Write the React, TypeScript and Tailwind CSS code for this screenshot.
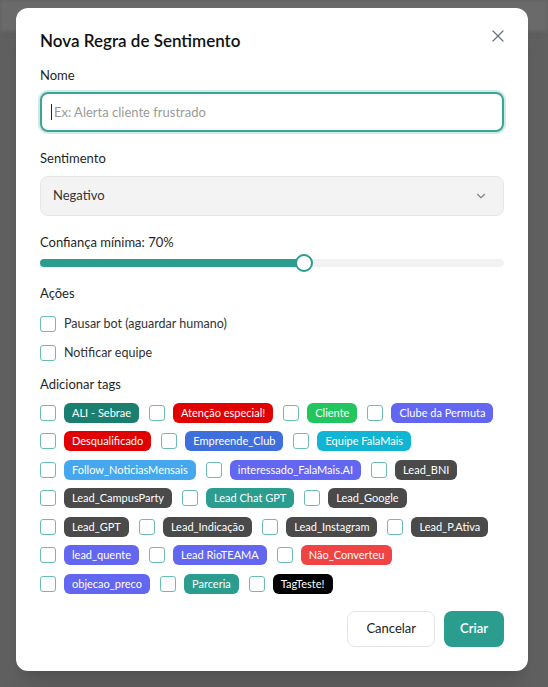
import { X, ChevronDown } from 'lucide-react'

type Tag = { label: string; color: string }

const tags: Tag[] = [
  { label: 'ALI - Sebrae', color: 'bg-[#1b7f6f]' },
  { label: 'Atenção especial!', color: 'bg-[#e00000]' },
  { label: 'Cliente', color: 'bg-[#22c55e]' },
  { label: 'Clube da Permuta', color: 'bg-[#6366f1]' },
  { label: 'Desqualificado', color: 'bg-[#e00000]' },
  { label: 'Empreende_Club', color: 'bg-[#3f6fdc]' },
  { label: 'Equipe FalaMais', color: 'bg-[#0fb5d3]' },
  { label: 'Follow_NoticiasMensais', color: 'bg-[#45a8ee]' },
  { label: 'interessado_FalaMais.AI', color: 'bg-[#6366f1]' },
  { label: 'Lead_BNI', color: 'bg-[#4a4a4a]' },
  { label: 'Lead_CampusParty', color: 'bg-[#4a4a4a]' },
  { label: 'Lead Chat GPT', color: 'bg-[#2a9d8f]' },
  { label: 'Lead_Google', color: 'bg-[#4a4a4a]' },
  { label: 'Lead_GPT', color: 'bg-[#4a4a4a]' },
  { label: 'Lead_Indicação', color: 'bg-[#4a4a4a]' },
  { label: 'Lead_Instagram', color: 'bg-[#4a4a4a]' },
  { label: 'Lead_P.Ativa', color: 'bg-[#4a4a4a]' },
  { label: 'lead_quente', color: 'bg-[#6366f1]' },
  { label: 'Lead RioTEAMA', color: 'bg-[#6366f1]' },
  { label: 'Não_Converteu', color: 'bg-[#f04444]' },
  { label: 'objecao_preco', color: 'bg-[#6366f1]' },
  { label: 'Parceria', color: 'bg-[#2a9d8f]' },
  { label: 'TagTeste!', color: 'bg-black' },
]

function Box() {
  return <span className="block w-4 h-4 shrink-0 rounded-[3px] border-[1.5px] border-[#6bbdb2] bg-white" />
}

function Label({ children }: { children: React.ReactNode }) {
  return <p className="text-[13px] leading-5 text-[#1f1f1f]">{children}</p>
}

export default function App() {
  return (
    <div className="relative h-[687px] w-full overflow-hidden bg-[#606060] font-['Lato',sans-serif]">
      {/* blurred page header behind the overlay */}
      <div className="absolute inset-x-0 top-0 h-[34px] bg-[#6a6a6a] border-b-2 border-[#575757] blur-[2px]" />

      <div className="relative flex pl-4 pt-2">
        <div className="relative w-[512px] rounded-xl bg-white p-6 shadow-xl">
          <button className="absolute right-5 top-[18px] text-[#6b7280]">
            <X size={20} strokeWidth={1.5} />
          </button>

          <h2 className="text-[17px] font-semibold leading-[18px] text-[#111]">Nova Regra de Sentimento</h2>

          {/* Nome */}
          <div className="mt-[15px]">
            <Label>Nome</Label>
            <div className="relative mt-[7px]">
              <input
                className="h-10 w-full rounded-lg border-2 border-[#3aa596] px-3 text-[13px] text-[#222] outline-none ring-2 ring-[#cfeae6] placeholder:text-[#9a9a9a]"
                placeholder="Ex: Alerta cliente frustrado"
              />
              <span className="absolute left-[11px] top-[12px] h-4 w-px bg-[#222]" />
            </div>
          </div>

          {/* Sentimento */}
          <div className="mt-4">
            <Label>Sentimento</Label>
            <div className="mt-[8px] flex h-10 items-center justify-between rounded-lg border border-[#e6e6e6] bg-[#f3f3f3] pl-3 pr-[15px] text-[13px] text-[#333]">
              <span>Negativo</span>
              <ChevronDown size={14} className="text-[#888]" />
            </div>
          </div>

          {/* Confiança */}
          <div className="mt-4">
            <Label>Confiança mínima: 70%</Label>
            <div className="relative mt-[2px] h-[18px]">
              <div className="absolute inset-x-0 top-[5px] h-2 rounded-full bg-[#f1f1f1]" />
              <div className="absolute left-0 top-[5px] h-2 w-[57%] rounded-full bg-[#2a9d8f]" />
              <div className="absolute left-[57%] top-0 h-[18px] w-[18px] -translate-x-1/2 rounded-full border-2 border-[#2a9d8f] bg-white" />
            </div>
          </div>

          {/* Ações */}
          <div className="mt-[11px]">
            <Label>Ações</Label>
            <div className="mt-[12px] flex flex-col gap-[10px]">
              <label className="flex items-center gap-2 text-[12.5px] text-[#333]">
                <Box />
                Pausar bot (aguardar humano)
              </label>
              <label className="flex items-center gap-2 text-[12.5px] text-[#333]">
                <Box />
                Notificar equipe
              </label>
            </div>
          </div>

          {/* Tags */}
          <div className="mt-[11px]">
            <Label>Adicionar tags</Label>
            <div className="mt-[9px] flex flex-wrap gap-x-[10px] gap-y-[8px]">
              {tags.map((t) => (
                <label key={t.label} className="flex h-[20.5px] items-center gap-2">
                  <Box />
                  <span className={`${t.color} rounded-md px-2 text-[11px] leading-5 text-white`}>{t.label}</span>
                </label>
              ))}
            </div>
          </div>

          <div className="mt-[17px] flex justify-end gap-[9px]">
            <button className="h-9 rounded-lg border border-[#e5e5e5] bg-white px-[18px] text-[13px] text-[#222]">Cancelar</button>
            <button className="h-9 rounded-lg bg-[#2a9d8f] px-4 text-[13px] font-semibold text-white">Criar</button>
          </div>
        </div>
      </div>
    </div>
  )
}
